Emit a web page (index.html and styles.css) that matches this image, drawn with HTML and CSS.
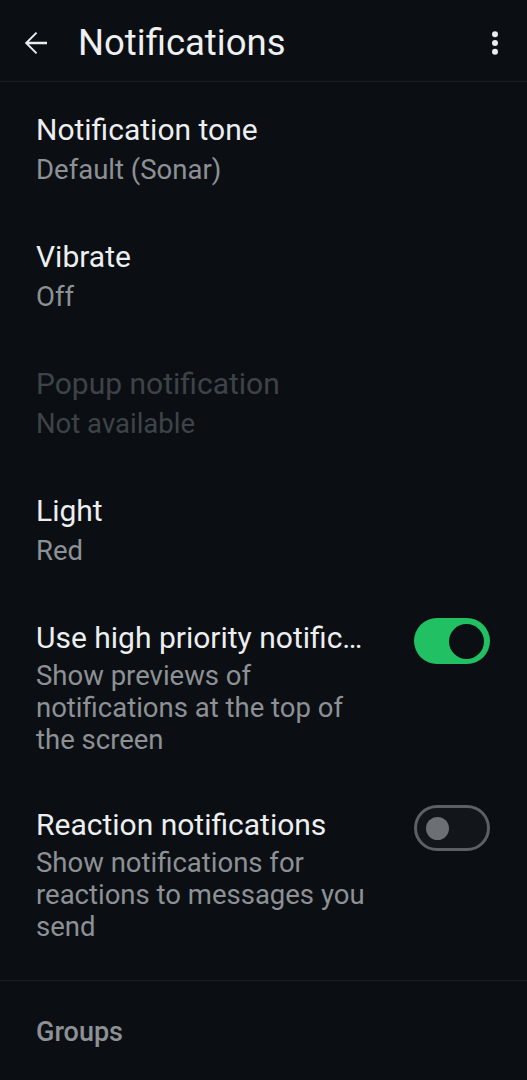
FILE: index.html
```html
<!DOCTYPE html>
<html lang="en">
<head>
<meta charset="utf-8">
<title>Notifications</title>
<link rel="stylesheet" href="styles.css">
</head>
<body>
<header class="appbar">
  <svg class="icon back" viewBox="0 0 24 24" width="36" height="36" aria-hidden="true">
    <path fill="#e9edef" d="M20 11.1H7.9l5.6-5.6L12.6 4.6 5.2 12l7.4 7.4.9-.9-5.6-5.6H20z"/>
  </svg>
  <h1 class="appbar-title">Notifications</h1>
  <svg class="icon more" viewBox="0 0 24 24" width="36" height="36" aria-hidden="true">
    <circle cx="12" cy="6.2" r="2" fill="#e9edef"/>
    <circle cx="12" cy="12" r="2" fill="#e9edef"/>
    <circle cx="12" cy="17.9" r="2" fill="#e9edef"/>
  </svg>
</header>

<main class="list">
  <div class="item">
    <div class="text">
      <div class="title">Notification tone</div>
      <div class="sub">Default (Sonar)</div>
    </div>
  </div>
  <div class="item">
    <div class="text">
      <div class="title">Vibrate</div>
      <div class="sub">Off</div>
    </div>
  </div>
  <div class="item disabled">
    <div class="text">
      <div class="title">Popup notification</div>
      <div class="sub">Not available</div>
    </div>
  </div>
  <div class="item">
    <div class="text">
      <div class="title">Light</div>
      <div class="sub">Red</div>
    </div>
  </div>
  <div class="item has-switch">
    <div class="text">
      <div class="title">Use high priority notifications</div>
      <div class="sub">Show previews of notifications at the top of the screen</div>
    </div>
    <span class="switch on"><span class="knob"></span></span>
  </div>
  <div class="item has-switch last">
    <div class="text">
      <div class="title">Reaction notifications</div>
      <div class="sub">Show notifications for reactions to messages you send</div>
    </div>
    <span class="switch off"><span class="knob"></span></span>
  </div>
</main>

<div class="divider"></div>
<h2 class="section-header">Groups</h2>
</body>
</html>
```

FILE: styles.css
```css
html, body {
  margin: 0;
  padding: 0;
  background: #0b0f13;
}

body {
  width: 527px;
  height: 1080px;
  overflow: hidden;
  font-family: Roboto, "Noto Sans", "Liberation Sans", sans-serif;
  color: #e9edef;
}

.appbar {
  box-sizing: border-box;
  height: 82px;
  padding-top: 4px;
  display: flex;
  align-items: center;
  border-bottom: 1px solid #1b1f23;
}

.icon {
  display: block;
  flex: none;
}

.back {
  margin-left: 17px;
}

.appbar-title {
  margin: 0 0 0 25px;
  flex: 1;
  font-size: 36.5px;
  font-weight: 400;
  line-height: 42px;
  color: #eef0f1;
}

.more {
  margin-right: 14px;
}

.list {
  display: flex;
  flex-direction: column;
}

.item {
  display: flex;
  align-items: flex-start;
  padding: 28px 37px 23px 36px;
}

.item.has-switch {
  padding-bottom: 21px;
}

.item.has-switch .sub {
  margin-top: 2px;
}

.item.last {
  padding-bottom: 37px;
}

.text {
  flex: 1;
  min-width: 0;
}

.title {
  font-size: 30px;
  line-height: 40px;
  color: #eceef0;
  white-space: nowrap;
  overflow: hidden;
  text-overflow: ellipsis;
}

.sub {
  margin-top: 4px;
  font-size: 27.5px;
  line-height: 32px;
  color: #8d9195;
}

.disabled .title,
.disabled .sub {
  color: #3e4348;
}

.switch {
  flex: none;
  box-sizing: border-box;
  width: 76px;
  height: 46px;
  margin-left: 44px;
  border-radius: 23px;
  display: flex;
  align-items: center;
}

.switch.on {
  background: #21c063;
  justify-content: flex-end;
  padding-right: 6px;
}

.switch.on .knob {
  width: 35px;
  height: 35px;
  border-radius: 50%;
  background: #0b0f13;
}

.switch.off {
  background: #12161a;
  border: 3px solid #5c6064;
  padding-left: 9px;
}

.switch.off .knob {
  width: 23px;
  height: 23px;
  border-radius: 50%;
  background: #6c7075;
}

.divider {
  height: 1px;
  background: #1b1f23;
}

.section-header {
  margin: 0;
  padding: 35px 36px 0;
  font-size: 27px;
  font-weight: 500;
  line-height: 32px;
  color: #8d9195;
}
```
